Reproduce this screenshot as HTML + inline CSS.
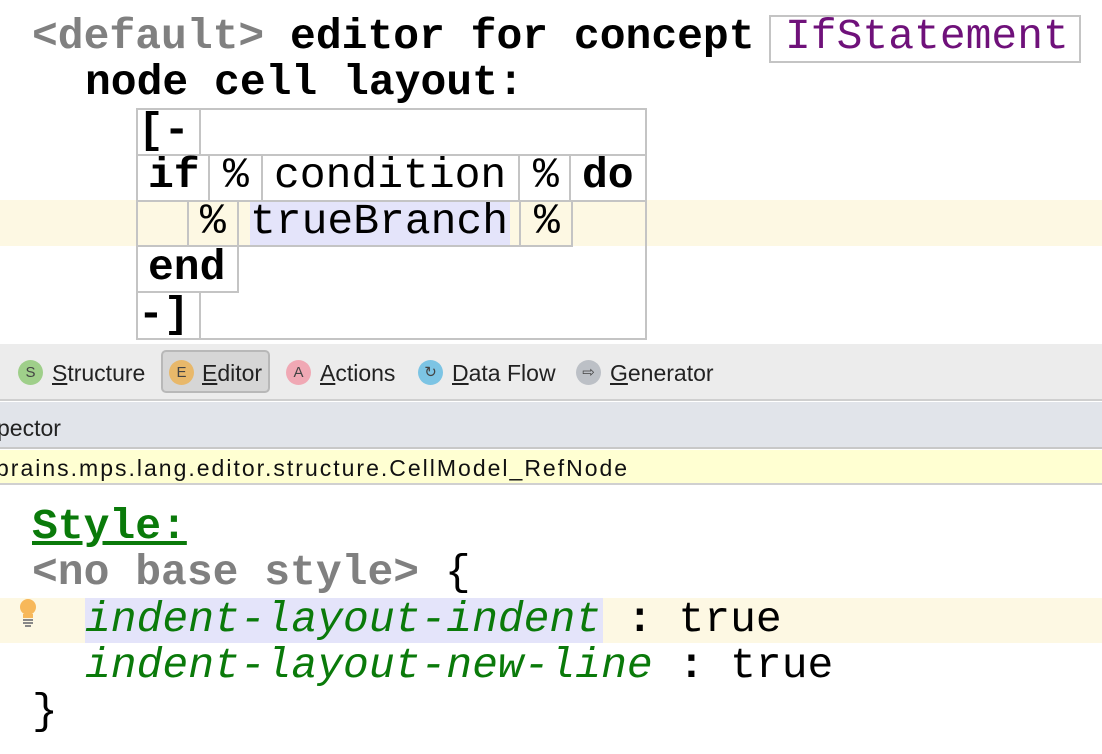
<!DOCTYPE html>
<html><head><meta charset="utf-8"><style>
*{margin:0;padding:0;box-sizing:border-box}
body{width:1102px;height:754px;position:relative;overflow:hidden;background:#fff;font-family:"Liberation Mono",monospace}
.t{position:absolute;font-size:43px;line-height:46px;white-space:pre;color:#000}
.b{font-weight:bold}
.g{color:#808080}
.c{position:absolute;border:2px solid #c4c4c4}
.s{position:absolute;font-family:"Liberation Sans",sans-serif;font-size:23px;line-height:26px;white-space:pre;color:#222}
.ic{position:absolute;width:25px;height:25px;border-radius:50%;font-family:"Liberation Sans",sans-serif;font-size:15px;line-height:25px;text-align:center;color:#444}
</style></head><body>
<div class="t b" style="left:32px;top:14px"><span class="g">&lt;default&gt;</span> editor for concept</div>
<div class="c" style="left:769px;top:15px;width:312px;height:48px"></div>
<div class="t" style="left:785px;top:14px;color:#6f117a">IfStatement</div>
<div class="t b" style="left:85px;top:60px">node cell layout:</div>

<div style="position:absolute;left:0;top:200px;width:1102px;height:46px;background:#fdf8e3"></div>
<div style="position:absolute;left:250px;top:201px;width:260px;height:44px;background:#e4e4fa"></div>
<div class="c" style="left:136px;top:108px;width:511px;height:232px"></div>
<div class="c" style="left:136px;top:108px;width:65px;height:48px"></div>
<div class="c" style="left:136px;top:154px;width:511px;height:48px"></div>
<div class="c" style="left:208px;top:154px;width:55px;height:48px"></div>
<div class="c" style="left:518px;top:154px;width:53px;height:48px"></div>
<div class="c" style="left:136px;top:200px;width:437px;height:47px"></div>
<div class="c" style="left:187px;top:200px;width:52px;height:47px"></div>
<div class="c" style="left:519px;top:200px;width:54px;height:47px"></div>
<div class="c" style="left:136px;top:245px;width:103px;height:48px"></div>
<div class="c" style="left:136px;top:291px;width:65px;height:49px"></div>
<div class="t" style="left:138px;top:108px"><b>[-</b></div>
<div class="t b" style="left:148px;top:153px">if</div>
<div class="t" style="left:223px;top:153px">%</div>
<div class="t" style="left:274px;top:153px">condition</div>
<div class="t" style="left:533px;top:153px">%</div>
<div class="t b" style="left:582px;top:153px">do</div>
<div class="t" style="left:200px;top:199px">%</div>
<div class="t" style="left:250px;top:199px">trueBranch</div>
<div class="t" style="left:534px;top:199px">%</div>
<div class="t b" style="left:148px;top:245px">end</div>
<div class="t" style="left:138px;top:292px"><b>-]</b></div>

<div style="position:absolute;left:0;top:344px;width:1102px;height:57px;background:#ececec;border-bottom:2px solid #cfcfcf"></div>
<div style="position:absolute;left:161px;top:350px;width:109px;height:43px;background:#d6d6d6;border:2px solid #b8b8b8;border-radius:5px"></div>
<div class="ic" style="left:18px;top:360px;background:#9fcf8a">S</div>
<div class="s" style="left:52px;top:360px"><u>S</u>tructure</div>
<div class="ic" style="left:169px;top:360px;background:#e8b86a">E</div>
<div class="s" style="left:202px;top:360px"><u>E</u>ditor</div>
<div class="ic" style="left:286px;top:360px;background:#f0a8b4">A</div>
<div class="s" style="left:320px;top:360px"><u>A</u>ctions</div>
<div class="ic" style="left:418px;top:360px;background:#7cc4e4">&#x21bb;</div>
<div class="s" style="left:452px;top:360px"><u>D</u>ata Flow</div>
<div class="ic" style="left:576px;top:360px;background:#bcc0c6">&#x21e8;</div>
<div class="s" style="left:610px;top:360px"><u>G</u>enerator</div>

<div style="position:absolute;left:0;top:402px;width:1102px;height:47px;background:#e1e4ea;border-bottom:2px solid #c8c8c8"></div>
<div class="s" style="left:-3px;top:415px">pector</div>
<div style="position:absolute;left:0;top:450px;width:1102px;height:35px;background:#ffffd2;border-bottom:2px solid #d0d0d0"></div>
<div class="s" style="left:-4px;top:455px;color:#111;letter-spacing:2px">brains.mps.lang.editor.structure.CellModel_RefNode</div>

<div class="t b" style="left:32px;top:504px;color:#0a7a0a;text-decoration:underline">Style:</div>
<div class="t" style="left:32px;top:550px"><b class="g">&lt;no base style&gt;</b> {</div>
<div style="position:absolute;left:0;top:598px;width:1102px;height:45px;background:#fdf8e3"></div>
<div style="position:absolute;left:85px;top:598px;width:518px;height:45px;background:#e4e4fa"></div>
<svg style="position:absolute;left:16px;top:597px" width="24" height="34" viewBox="0 0 24 34"><circle cx="12" cy="10" r="8" fill="#f7b85a"/><rect x="7" y="17" width="10" height="4" fill="#f7b85a"/><rect x="7" y="22" width="10" height="2" fill="#888"/><rect x="7" y="25" width="10" height="2" fill="#888"/><rect x="9" y="28" width="6" height="2" fill="#888"/></svg>
<div class="t" style="left:85px;top:597px"><i style="color:#0a7a0a">indent-layout-indent</i> <b>:</b> true</div>
<div class="t" style="left:85px;top:643px"><i style="color:#0a7a0a">indent-layout-new-line</i> <b>:</b> true</div>
<div class="t" style="left:32px;top:689px">}</div>
</body></html>
